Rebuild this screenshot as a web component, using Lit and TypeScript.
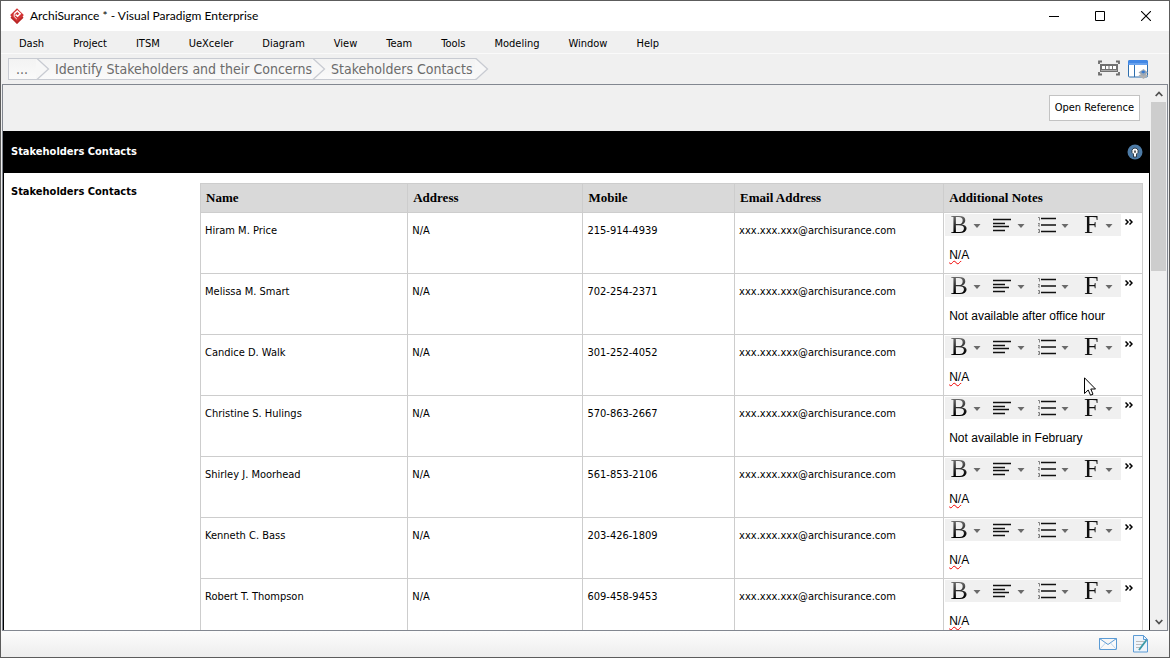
import { LitElement, html, css } from "lit";
import { customElement, property } from "lit/decorators.js";

const MENUS = ["Dash", "Project", "ITSM", "UeXceler", "Diagram", "View", "Team", "Tools", "Modeling", "Window", "Help"];
const TRAIL = ["...", "Identify Stakeholders and their Concerns", "Stakeholders Contacts"];

interface Contact {
  name: string;
  mobile: string;
  notes: string;
}

const CONTACTS: Contact[] = [
  { name: "Hiram M. Price", mobile: "215-914-4939", notes: "N/A" },
  { name: "Melissa M. Smart", mobile: "702-254-2371", notes: "Not available after office hour" },
  { name: "Candice D. Walk", mobile: "301-252-4052", notes: "N/A" },
  { name: "Christine S. Hulings", mobile: "570-863-2667", notes: "Not available in February" },
  { name: "Shirley J. Moorhead", mobile: "561-853-2106", notes: "N/A" },
  { name: "Kenneth C. Bass", mobile: "203-426-1809", notes: "N/A" },
  { name: "Robert T. Thompson", mobile: "609-458-9453", notes: "N/A" },
];

const resets = css`
  * { box-sizing: border-box; }
  button {
    appearance: none;
    border: 0;
    margin: 0;
    padding: 0;
    background: none;
    color: inherit;
    font: inherit;
    display: flex;
    align-items: center;
  }
  svg { display: block; flex: none; }
`;

@customElement("note-editor")
export class NoteEditor extends LitElement {
  @property() text = "";
  @property() label = "";

  static styles = [resets, css`
    :host { display: block; }
    .bar { display: flex; align-items: flex-start; }
    .tools { display: flex; background: #f0f0f0; }
    .tool { width: 44px; height: 22px; }
    .glyph { width: 28px; display: flex; justify-content: center; }
    .letter {
      font: 26px/22px "Liberation Serif", serif;
      color: transparent;
      background: linear-gradient(#777, #000 80%);
      background-clip: text;
      -webkit-background-clip: text;
    }
    .dark { background: linear-gradient(#111, #111); background-clip: text; -webkit-background-clip: text; }
    .more { margin: 5px 0 0 4px; }
    .text {
      margin: 11px 0 0 4px;
      font: 12px/16px "Liberation Sans", sans-serif;
      color: #000;
      outline: 0;
    }
    .misspelt {
      text-decoration: underline wavy #f00000 1px;
      text-decoration-skip-ink: none;
      text-underline-offset: 1px;
    }
  `];

  private caret() {
    return html`<svg width="8" height="6" viewBox="0 0 8 6"><path d="M.5 2h7L4 6z" fill="#6a6a6a" /></svg>`;
  }

  render() {
    const letters = (c: string, dark = false) => html`<span class="letter ${dark ? "dark" : ""}">${c}</span>`;
    const align = html`<svg width="20" height="14" viewBox="0 0 20 14">
      <path d="M0 1.5h18M0 5.500h12M0 8.500h16M0 12.500h12" stroke="#111" stroke-width="1.500" /></svg>`;
    const list = html`<svg width="18" height="16" viewBox="0 0 18 16">
      <path d="M3 1.5h15M3 8h15M3 14.5h15" stroke="#111" stroke-width="1.500" />
      <path d="M0 .5h1.5v3M0 6.5h1.5l-1 2.500h1.5M0 12.5h1.5v3H0M.5 14h1" fill="none" stroke="#666" stroke-width=".8" /></svg>`;
    const tools = [
      ["Font style", letters("B")],
      ["Alignment", align],
      ["List", list],
      ["Font", letters("F", true)],
    ] as const;
    const note = this.text === "N/A" ? html`<span class="misspelt">N/</span>A` : this.text;
    return html`
      <div class="bar">
        <div class="tools">
          ${tools.map(([name, icon]) => html`<button class="tool" aria-label=${name}><span class="glyph">${icon}</span>${this.caret()}</button>`)}
        </div>
        <button class="more" aria-label="More tools">
          <svg width="8" height="6" viewBox="0 0 8 6"><path d="M.5 .5L3 3L.5 5.500M4.500 .5L7 3L4.500 5.500" fill="none" stroke="#000" stroke-width="1.500" /></svg>
        </button>
      </div>
      <div class="text" role="textbox" aria-label=${this.label}>${note}</div>
    `;
  }
}

@customElement("app-root")
export class AppRoot extends LitElement {
  static styles = [resets, css`
    :host {
      display: flex;
      flex-direction: column;
      box-sizing: border-box;
      height: 100vh;
      border: 1px solid #5c5c5c;
      background: #f0f0f0;
      color: #000;
      font: 11px/16px "DejaVu Sans Condensed", "Noto Sans", sans-serif;
      overflow: hidden;
    }
    .title {
      display: flex;
      align-items: center;
      flex: none;
      height: 30px;
      padding-left: 8px;
      background: #fff;
      font: 12px/16px Lato, "Open Sans", sans-serif;
    }
    .caption { flex: 1; margin-left: 5px; }
    .win { width: 46px; height: 30px; justify-content: center; }
    .menus {
      display: flex;
      flex: none;
      height: 23px;
      padding-left: 4px;
      border-bottom: 1px solid #fafafa;
    }
    .menu { padding: 3px 15px 0 14px; }
    .path { display: flex; align-items: center; justify-content: space-between; flex: none; height: 30px; padding: 0 21px 0 7px; }
    .trail { display: flex; margin: 0; padding: 0; list-style: none; }
    .crumb {
      display: flex;
      height: 22px;
      border: solid #c8cbd2;
      border-width: 1px 0;
      background: linear-gradient(#f3f3f3, #fafafa);
      font-size: 14px;
      line-height: 20px;
    }
    .crumb:first-child { border-left-width: 1px; }
    .crumb:last-child { border-width: 0; background: none; }
    .step { padding: 0 0 0 5px; color: #6b6b6b; text-decoration: none; }
    .crumb:first-child .step { padding: 0 8px 0 7px; }
    .crumb:last-child .step { padding-right: 2px; border: solid #c8cbd2; border-width: 1px 0; background: linear-gradient(#f3f3f3, #fafafa); }
    .icons { display: flex; align-items: center; gap: 8px; }
    .frame {
      display: flex;
      flex: 1;
      min-height: 0;
      margin: 0 1px;
      border: 1px solid #828790;
      overflow: hidden;
    }
    .page { flex: 1; min-width: 0; overflow: hidden; }
    .actions { display: flex; justify-content: flex-end; padding: 10px 10px 10px 0; }
    .open { height: 26px; padding: 0 5px; border: 1px solid #c3c3c3; background: #fff; }
    .form { border: 1px solid #000; border-top: 0; background: #fff; }
    .heading {
      display: flex;
      align-items: center;
      justify-content: space-between;
      height: 42px;
      padding: 0 6px 0 7px;
      background: #000;
      color: #fff;
    }
    .label { margin: 0; font-size: 11px; line-height: 16px; font-weight: bold; }
    .field { display: grid; grid-template-columns: 189px 1fr; padding: 10px 6px 0 7px; }
    .cellname { padding-top: 1px; }
    .grid { width: 100%; border-collapse: collapse; table-layout: fixed; }
    .grid th, .grid td { border: 1px solid #cdcdcd; text-align: left; vertical-align: top; }
    .grid th { height: 29px; padding: 0 5px; background: #d9d9d9; font: bold 13px/16px "Liberation Serif", serif; vertical-align: middle; }
    .grid td { height: 61px; padding: 10px 4px 0; }
    .grid td.notes { padding: 1px 0 0 1px; }
    .c1 { width: 22%; }
    .c2 { width: 18.6%; }
    .c3 { width: 16.1%; }
    .c4 { width: 22.2%; }
    .scroll { display: flex; flex-direction: column; flex: none; width: 17px; background: #f0f0f0; }
    .arrow { height: 17px; justify-content: center; }
    .track { flex: 1; }
    .thumb { height: 33%; margin: 0 1px; background: #cdcdcd; }
    .status {
      display: flex;
      flex: none;
      align-items: center;
      justify-content: flex-end;
      gap: 16px;
      height: 26px;
      padding-right: 20px;
      background: linear-gradient(#fcfcfc, #ededed);
    }
    .pointer { position: absolute; left: 1084px; top: 377px; }
  `];

  private chevron(last: boolean) {
    return html`<svg width="14" height=${last ? 22 : 20} viewBox=${last ? "0 0 14 22" : "0 1 14 20"}>
      <path d="M0 .5h1L12.500 11L1 21.500H0z" fill="#f7f7f7" /><path d="${last ? "M0 .5h1L12.500 11L1 21.500H0" : "M1 .5L12.500 11L1 21.500"}" fill="none" stroke="#c8cbd2" stroke-width="1.300" /></svg>`;
  }

  render() {
    return html`
      <header class="title">
        <svg width="16" height="16" viewBox="0 0 16 16"><path d="M8 .3L14.800 7L8 15.700L1.200 7z" fill="#d23434" /><path d="M2.600 8.300L1.500 9.700L8 15.900L14.500 9.700L13.400 8.300L8 13.700z" fill="#b82626" /><path d="M5.200 5.800L8.300 3L11.200 5.800L8.600 8.300L6.600 6.600" fill="none" stroke="#fff" stroke-width="1.500" /><path d="M5.200 5.800L5.200 8.600L7.800 11" fill="none" stroke="#fff" /></svg>
        <span class="caption">ArchiSurance * - Visual Paradigm Enterprise</span>
        <button class="win" aria-label="Minimize"><svg width="10" height="10"><path d="M0 5.500h10" stroke="#000" /></svg></button>
        <button class="win" aria-label="Maximize"><svg width="10" height="10"><path d="M.5 .5h9v9h-9z" fill="none" stroke="#000" /></svg></button>
        <button class="win" aria-label="Close"><svg width="10" height="10"><path d="M0 0L10 10M10 0L0 10" stroke="#000" stroke-width="1.100" /></svg></button>
      </header>
      <nav class="menus" aria-label="Main menu">${MENUS.map((m) => html`<button class="menu">${m}</button>`)}</nav>
      <div class="path">
        <ol class="trail">
          ${TRAIL.map((t, i) => html`<li class="crumb"><a class="step" href="#">${t}</a>${this.chevron(i === TRAIL.length - 1)}</li>`)}
        </ol>
        <div class="icons">
          <button aria-label="Fit width"><svg width="22" height="18" viewBox="0 0 22 18"><path d="M1 4V1.500h3M18 1.500h3V4M1 12v2.500h3M18 14.500h3V12" fill="none" stroke="#6c6c6c" stroke-width="1.800" /><path d="M2 4h18v8H2z" fill="#707070" /><path d="M4 6h3v3H4zM8 6h2.500v3H8zM11.500 6H14v3h-2.500zM15 6h3v3h-3z" fill="#fff" /><path d="M3 10.500h16" stroke="#aaa" /></svg></button>
          <button aria-label="Open layout"><svg width="20" height="20" viewBox="0 0 20 20"><rect x=".5" y="1.500" width="19" height="16.500" rx="1" fill="#fff" stroke="#2f6fae" /><path d="M0 3q0-2 2-2h16q2 0 2 2v3H0z" fill="#4288e6" /><path d="M1 5h18" stroke="#8fbcf5" /><path d="M6.500 6v12" stroke="#2f6fae" /><path d="M10.500 16.500l5-3 4.500 3-4.500 3.500z" fill="#b0b0b0" /><path d="M10.500 13.500l5-3.500 4.500 3.500-4.500 3.500z" fill="#9aa7b5" /><path d="M13 13l2.300-1.500 2.300 1.500-2.300 1.500z" fill="#3579d0" /></svg></button>
        </div>
      </div>
      <div class="frame">
        <main class="page">
          <div class="actions"><button class="open">Open Reference</button></div>
          <section class="form">
            <div class="heading">
              <h1 class="label">Stakeholders Contacts</h1>
              <button aria-label="Show guide"><svg width="16" height="16" viewBox="0 0 16 16"><circle cx="8" cy="8" r="7.500" fill="#4d7ba6" /><path d="M8 4a3.200 3.200 0 0 1 1.500 6v3h-3v-3A3.200 3.200 0 0 1 8 4z" fill="#fff" stroke="#26323e" stroke-width=".9" /><path d="M7.300 6.500h1.400v2.300H7.300z" fill="#222" /></svg></button>
            </div>
            <div class="field">
              <h2 class="label cellname">Stakeholders Contacts</h2>
              <table class="grid">
                <colgroup><col class="c1" /><col class="c2" /><col class="c3" /><col class="c4" /><col /></colgroup>
                <thead><tr><th>Name</th><th>Address</th><th>Mobile</th><th>Email Address</th><th>Additional Notes</th></tr></thead>
                <tbody>
                  ${CONTACTS.map((c) => html`<tr>
                    <td>${c.name}</td><td>N/A</td><td>${c.mobile}</td><td>xxx.xxx.xxx@archisurance.com</td>
                    <td class="notes"><note-editor .text=${c.notes} .label=${"Notes for " + c.name}></note-editor></td>
                  </tr>`)}
                </tbody>
              </table>
            </div>
          </section>
        </main>
        <div class="scroll">
          <button class="arrow" aria-label="Scroll up"><svg width="8" height="6"><path d="M.7 5L4 1.500L7.300 5" fill="none" stroke="#505050" stroke-width="1.800" /></svg></button>
          <div class="track"><div class="thumb"></div></div>
          <button class="arrow" aria-label="Scroll down"><svg width="8" height="6"><path d="M.7 1L4 4.500L7.300 1" fill="none" stroke="#505050" stroke-width="1.800" /></svg></button>
        </div>
      </div>
      <footer class="status">
        <button aria-label="Messages"><svg width="18" height="12" viewBox="0 0 18 12"><path d="M.5 .5h17v11H.5zM.5 .5L9 6.500L17.500 .5" fill="#fff" fill-opacity=".5" stroke="#5b9bd5" /><path d="M.5 11.500L6.500 5M17.500 11.500L11.500 5" stroke="#b9d3ec" /></svg></button>
        <button aria-label="Description"><svg width="16" height="18" viewBox="0 0 16 18"><path d="M.5 .5h10l4 4v12.500H.5z" fill="#eef4fb" stroke="#5b9bd5" /><path d="M10.500 .5v4h4" fill="none" stroke="#5b9bd5" /><path d="M3 6.500h8M3 9.500h8M3 12.500h6" stroke="#bbb" /><path d="M6 15L13.500 5" stroke="#3a9aa8" stroke-width="1.800" /></svg></button>
      </footer>
      <svg class="pointer" width="12" height="19" viewBox="0 0 12 19"><path d="M.5 .8V16.500L4.200 13L6.500 18.200L9 17.200L6.800 12H11.500z" fill="#fff" stroke="#000" /></svg>
    `;
  }
}
